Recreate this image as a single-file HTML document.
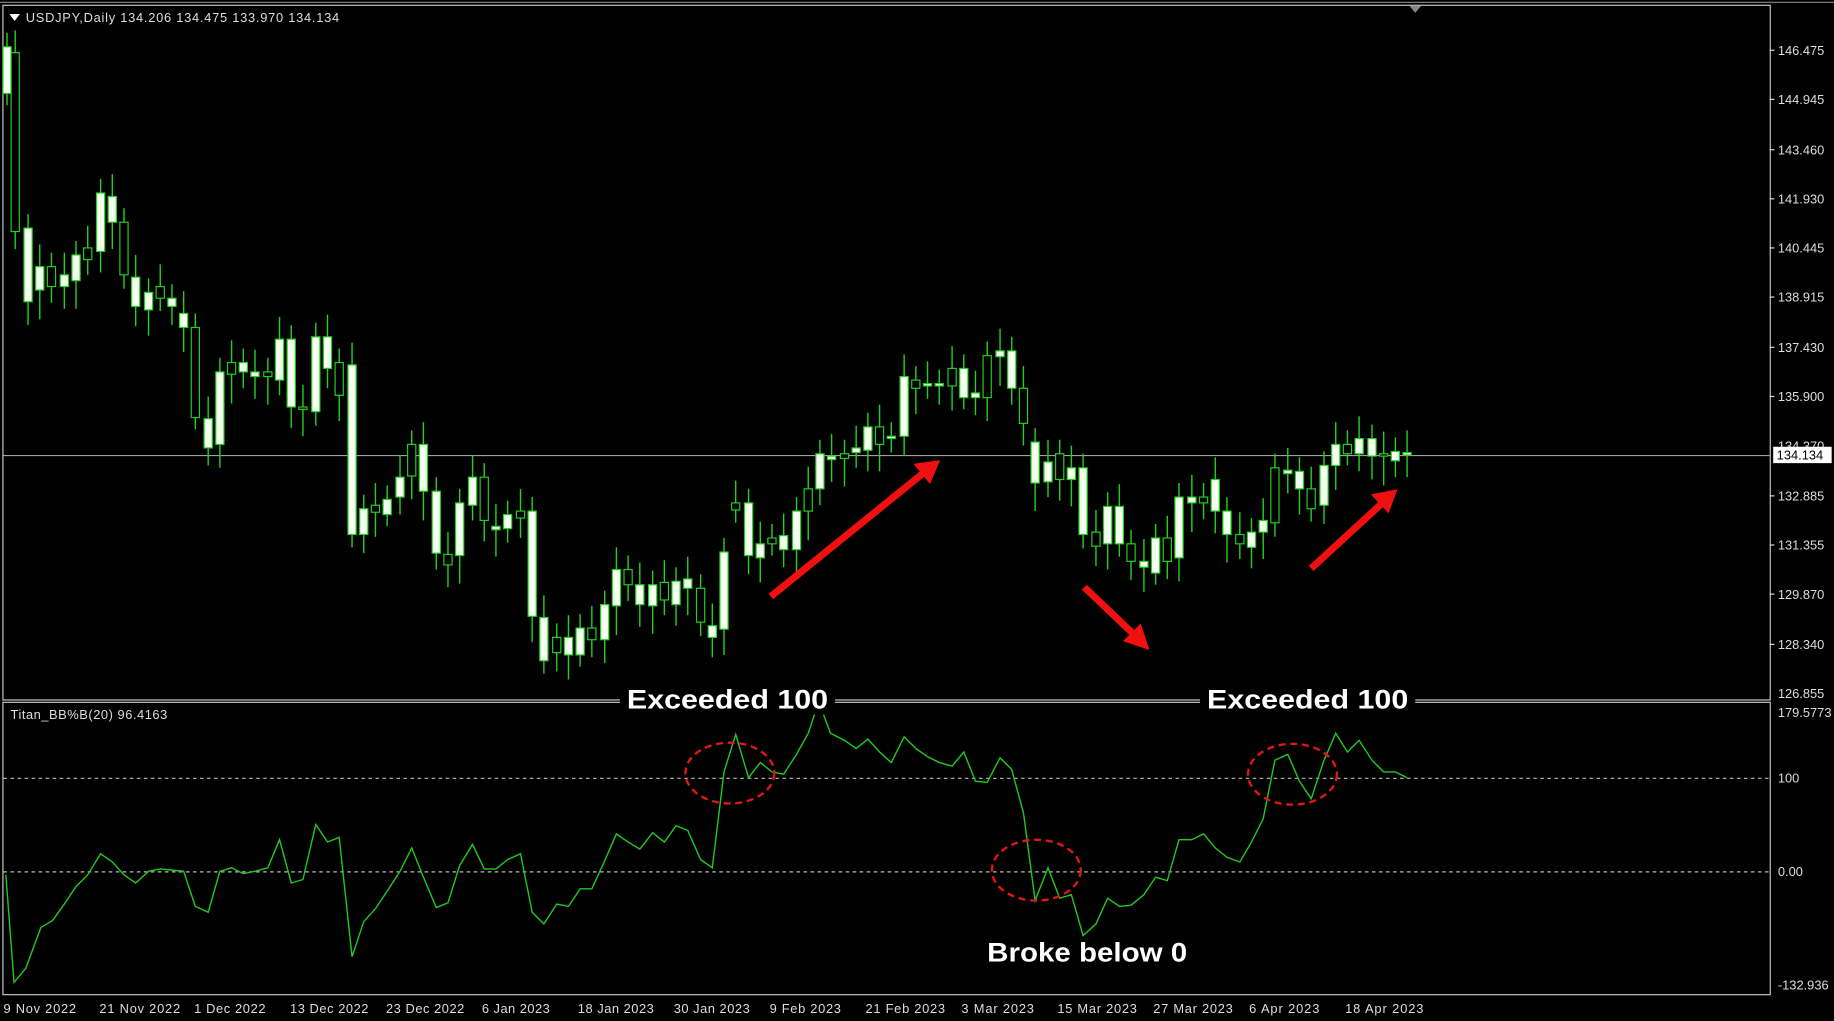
<!DOCTYPE html>
<html><head><meta charset="utf-8"><style>
html,body{margin:0;padding:0;background:#000;overflow:hidden}
svg{display:block}
text{font-family:"Liberation Sans",sans-serif}
</style></head><body>
<svg id="s" width="1834" height="1021" viewBox="0 0 1568 873" preserveAspectRatio="none" xmlns="http://www.w3.org/2000/svg">
<rect width="1568" height="873" fill="#000"/>
<rect x="2.5" y="4.5" width="1511" height="594" fill="none" stroke="#c8c8c8" stroke-width="1"/>
<rect x="2.5" y="600.5" width="1511" height="250" fill="none" stroke="#c8c8c8" stroke-width="1"/>
<line x1="0" y1="2" x2="1568" y2="2" stroke="#888"/>
<polygon points="1205,5 1215,5 1210,11" fill="#888"/>
<line x1="3" y1="389.5" x2="1513" y2="389.5" stroke="#a0a0a0"/>
<g id="candles"></g>
<line x1="3" y1="665.5" x2="1513" y2="665.5" stroke="#bbb" stroke-dasharray="3,3"/>
<line x1="3" y1="745.5" x2="1513" y2="745.5" stroke="#bbb" stroke-dasharray="3,3"/>
<polyline id="ind" fill="none" stroke="#22c822" stroke-width="1.2"/>
<polygon points="8,12 17,12 12.5,18" fill="#fff"/>
<text x="22" y="19" font-size="11" fill="#ddd" textLength="268">USDJPY,Daily  134.206 134.475 133.970 134.134</text>
<text x="9" y="615" font-size="11" fill="#ddd" textLength="134">Titan_BB%B(20) 96.4163</text>
<g font-size="11" fill="#ddd">
<text x="1520" y="47">146.475</text><text x="1520" y="89">144.945</text><text x="1520" y="132">143.460</text><text x="1520" y="174">141.930</text><text x="1520" y="216">140.445</text><text x="1520" y="258">138.915</text><text x="1520" y="301">137.430</text><text x="1520" y="343">135.900</text><text x="1520" y="385">134.370</text><text x="1520" y="428">132.885</text><text x="1520" y="470">131.355</text><text x="1520" y="512">129.870</text><text x="1520" y="555">128.340</text><text x="1520" y="597">126.855</text>
<text x="1520" y="613">179.5773</text><text x="1520" y="669">100</text><text x="1520" y="749">0.00</text><text x="1520" y="846">-132.936</text>
</g>
<rect x="1516" y="382" width="50" height="14" fill="#fff"/>
<text x="1519" y="393" font-size="11" fill="#000">134.134</text>
<g stroke="#ddd"><line x1="1513" y1="43" x2="1517" y2="43"/><line x1="1513" y1="85" x2="1517" y2="85"/><line x1="1513" y1="128" x2="1517" y2="128"/><line x1="1513" y1="170" x2="1517" y2="170"/><line x1="1513" y1="212" x2="1517" y2="212"/><line x1="1513" y1="254" x2="1517" y2="254"/><line x1="1513" y1="297" x2="1517" y2="297"/><line x1="1513" y1="339" x2="1517" y2="339"/><line x1="1513" y1="424" x2="1517" y2="424"/><line x1="1513" y1="466" x2="1517" y2="466"/><line x1="1513" y1="508" x2="1517" y2="508"/><line x1="1513" y1="551" x2="1517" y2="551"/></g>
<g font-size="11" fill="#ddd">
<text x="3" y="866" textLength="62">9 Nov 2022</text><text x="85" y="866" textLength="69">21 Nov 2022</text><text x="166" y="866" textLength="61">1 Dec 2022</text><text x="248" y="866" textLength="67">13 Dec 2022</text><text x="330" y="866" textLength="67">23 Dec 2022</text><text x="412" y="866" textLength="58">6 Jan 2023</text><text x="494" y="866" textLength="65">18 Jan 2023</text><text x="576" y="866" textLength="65">30 Jan 2023</text><text x="658" y="866" textLength="61">9 Feb 2023</text><text x="740" y="866" textLength="68">21 Feb 2023</text><text x="822" y="866" textLength="62">3 Mar 2023</text><text x="904" y="866" textLength="68">15 Mar 2023</text><text x="986" y="866" textLength="68">27 Mar 2023</text><text x="1068" y="866" textLength="60">6 Apr 2023</text><text x="1150" y="866" textLength="67">18 Apr 2023</text>
</g>
<rect x="530" y="585" width="184" height="26" fill="#000"/>
<rect x="1026" y="585" width="184" height="26" fill="#000"/>
<g font-size="23" font-weight="bold" fill="#fff">
<text x="536" y="606" textLength="172" lengthAdjust="spacingAndGlyphs">Exceeded 100</text>
<text x="1032" y="606" textLength="172" lengthAdjust="spacingAndGlyphs">Exceeded 100</text>
<text x="844" y="822" textLength="171" lengthAdjust="spacingAndGlyphs">Broke below 0</text>
</g>
<g fill="none" stroke="#e01818" stroke-width="2" stroke-dasharray="6,4">
<ellipse cx="624" cy="661" rx="38" ry="26"/>
<ellipse cx="886" cy="744" rx="38" ry="26"/>
<ellipse cx="1105" cy="662" rx="38" ry="26"/>
</g>
<g stroke="#f01010" stroke-width="6" fill="#f01010">
<line x1="659" y1="510" x2="790" y2="404"/><polygon points="803,394 782,397 795,413" stroke-width="1"/>
<line x1="927" y1="502" x2="970" y2="543"/><polygon points="982,555 961,548 975,534" stroke-width="1"/>
<line x1="1121" y1="486" x2="1182" y2="430"/><polygon points="1194,419 1173,423 1187,438" stroke-width="1"/>
</g>
</svg>
<script>
var c=[[6,40,80],[13,45,198],[24,195,258],[34,228,248],[44,228,245],[55,235,245],[65,218,240],[75,212,222],[86,165,215],[96,168,190],[106,190,235],[116,237,262],[127,250,265],[137,245,255],[147,255,262],[157,268,280],[167,280,357],[178,358,383],[188,318,380],[198,310,320],[208,310,318],[218,318,322],[229,318,322],[239,290,325],[249,290,348],[259,348,350],[270,288,352],[280,288,315],[290,310,338],[301,312,457],[311,435,457],[321,432,438],[331,427,440],[342,408,425],[352,380,407],[362,380,420],[373,420,473],[383,474,483],[393,430,475],[404,408,432],[414,408,445],[424,450,453],[434,440,452],[445,437,443],[455,437,527],[465,528,565],[476,545,558],[486,545,560],[496,537,560],[506,537,547],[517,517,547],[527,487,518],[537,487,500],[547,500,517],[558,500,518],[568,498,513],[578,497,517],[588,495,503],[599,503,532],[609,535,545],[619,472,538],[629,430,436],[640,430,475],[650,465,477],[660,460,465],[670,458,470],[681,437,470],[691,418,437],[701,388,418],[711,390,393],[722,388,392],[732,383,387],[742,365,385],[752,365,380],[762,373,375],[773,322,373],[783,325,332],[793,328,330],[803,328,330],[814,315,330],[824,315,340],[834,336,340],[844,304,340],[855,300,305],[865,300,332],[875,332,362],[885,378,413],[896,395,412],[906,388,410],[916,400,410],[926,400,457],[937,455,467],[947,433,465],[957,433,465],[967,465,480],[978,480,485],[988,460,490],[998,460,480],[1008,425,477],[1019,425,430],[1029,425,430],[1039,410,437],[1049,437,457],[1060,457,465],[1070,455,468],[1080,445,455],[1090,400,447],[1101,402,405],[1111,403,418],[1121,418,435],[1132,398,432],[1142,380,398],[1152,380,388],[1162,375,388],[1173,375,390],[1183,388,390],[1193,386,394],[1203,387,389]];
var h='';c.forEach(function(d,i){var x=d[0],a=d[1],b=d[2],up=12+(i*7)%14,dn=10+(i*5)%16;
h+='<line x1="'+x+'" y1="'+(a-up)+'" x2="'+x+'" y2="'+(b+dn)+'" stroke="#22d022" stroke-width="1.2"/>';
var fill=(i%3==1)?'#000':'#f4fff0';h+='<rect x="'+(x-3.5)+'" y="'+a+'" width="7" height="'+Math.max(2,b-a)+'" fill="'+fill+'" stroke="#22d022" stroke-width="1"/>';});
document.getElementById('candles').innerHTML=h;
var p="5,748 12,840 22,828 35,793 45,787 55,773 65,758 75,748 86,730 96,737 106,748 116,755 127,745 137,743 147,744 157,745 167,775 178,780 188,745 198,742 208,747 218,745 229,742 239,718 249,755 259,752 270,705 280,720 290,716 301,818 311,788 321,777 331,762 342,745 352,725 362,750 373,776 383,772 393,740 404,722 414,743 424,743 434,735 445,730 455,780 465,790 476,773 486,775 496,760 506,760 517,736 527,713 537,720 547,726 558,712 568,720 578,706 588,710 599,735 609,742 619,660 629,628 640,665 650,652 660,660 670,662 681,645 691,627 700,600 710,627 722,633 732,640 742,632 752,643 762,652 773,630 783,640 793,647 803,652 814,655 824,643 834,668 844,669 855,648 865,658 875,695 885,770 896,742 906,768 916,765 926,800 937,790 947,768 957,775 967,774 978,765 988,750 998,753 1008,718 1019,718 1029,713 1039,725 1049,733 1060,737 1070,720 1080,700 1090,650 1101,645 1111,668 1121,683 1132,650 1142,627 1152,643 1162,633 1173,650 1183,660 1193,660 1203,665";
document.getElementById('ind').setAttribute('points',p);
</script>
</body></html>
